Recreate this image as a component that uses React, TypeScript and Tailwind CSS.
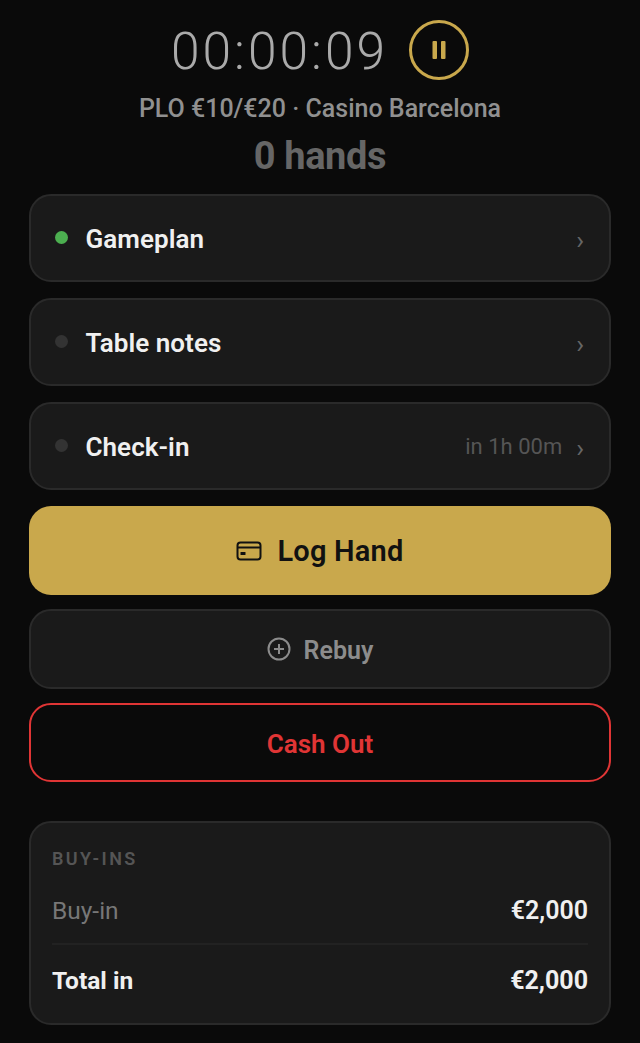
import React from "react";

function NavRow({ label, dot, right }: { label: string; dot: string; right?: string }) {
  return (
    <div className="flex h-[88px] items-center rounded-[22px] border-2 border-[#2a2a2a] bg-[#1a1a1a] pl-[24px] pr-[25px]">
      <span className={`mb-[1px] h-[13px] w-[13px] rounded-full ${dot}`} />
      <span className="ml-[17.5px] pt-[2px] text-[26px] font-semibold leading-none tracking-[0.05px] text-[#f0f0f0]">{label}</span>
      <span className="ml-auto pt-[2px] text-[22px] leading-none text-[#555555]">{right}</span>
      <span className="ml-[14px] pt-[4px] text-[26px] leading-none text-[#666666]">›</span>
    </div>
  );
}

export default function App() {
  return (
    <div className="flex h-[1043px] w-[640px] flex-col overflow-hidden bg-[#0a0a0a] px-[29px] pt-[20px] font-['Roboto',sans-serif]">
      <div className="flex h-[60px] items-center justify-center">
        <span className="pt-[4px] text-[51.5px] font-light leading-none tracking-[3px] text-[#aaaaaa]">00:00:09</span>
        <span className="ml-[21px] flex h-[60px] w-[60px] items-center justify-center rounded-full border-[3px] border-[#c9a84c]">
          <svg width="16" height="20" viewBox="0 0 16 20" fill="#c9a84c">
            <rect x="1.5" y="1" width="4.5" height="18" rx="1" />
            <rect x="10" y="1" width="4.5" height="18" rx="1" />
          </svg>
        </span>
      </div>
      <div className="mt-[15px] text-center text-[25px] font-medium leading-[28px] text-[#909090]">
        PLO €10/€20 · Casino Barcelona
      </div>
      <div className="mt-[11px] text-center text-[38px] font-bold leading-[44px] tracking-[-0.4px] text-[#666666]">0 hands</div>

      <div className="mt-[16px] flex flex-col gap-[16px]">
        <NavRow label="Gameplan" dot="bg-[#4caf50]" />
        <NavRow label="Table notes" dot="bg-[#333333]" />
        <NavRow label="Check-in" dot="bg-[#333333]" right="in 1h 00m" />
      </div>

      <button className="mt-[16px] flex h-[89px] items-center justify-center gap-[15px] rounded-[22px] bg-[#c9a84c] text-[29px] font-semibold tracking-[0.2px] text-[#111111]">
        <svg width="26" height="20" viewBox="0 0 26 20" fill="none" stroke="#111111" strokeWidth="2">
          <rect x="1.5" y="1.5" width="23" height="17" rx="3" />
          <path d="M1.5 6.5h23" />
          <rect x="4.5" y="11" width="5" height="3" rx="0.5" fill="#111111" stroke="none" />
        </svg>
        <span className="pt-[3px]">Log Hand</span>
      </button>

      <button className="mt-[14px] flex h-[80px] items-center justify-center gap-[13px] rounded-[22px] border-2 border-[#2a2a2a] bg-[#1a1a1a] text-[25px] font-semibold text-[#8c8c8c]">
        <svg width="24" height="24" viewBox="0 0 24 24" fill="none" stroke="#8c8c8c" strokeWidth="2">
          <circle cx="12" cy="12" r="10.5" />
          <path d="M12 7v10M7 12h10" />
        </svg>
        <span className="pt-[3px]">Rebuy</span>
      </button>

      <button className="mt-[14px] flex h-[79px] items-center justify-center rounded-[22px] border-2 border-[#e03535] text-[26px] font-semibold text-[#e03535]">
        <span className="pt-[3px]">Cash Out</span>
      </button>

      <div className="mt-[39px] flex h-[204px] flex-col rounded-[22px] border-2 border-[#2a2a2a] bg-[#1a1a1a] px-[21px]">
        <div className="mt-[26px] text-[18px] font-semibold leading-[20px] tracking-[2.4px] text-[#555555]">BUY-INS</div>
        <div className="mt-[27px] flex items-center justify-between pb-[17px] leading-[30px]">
          <span className="text-[24.5px] text-[#777777]">Buy-in</span>
          <span className="text-[25px] font-semibold text-[#f0f0f0]">€2,000</span>
        </div>
        <div className="flex items-center justify-between border-t-2 border-[#222222] pt-[21px] leading-[30px]">
          <span className="text-[24.5px] font-bold text-[#f0f0f0]">Total in</span>
          <span className="text-[25px] font-bold text-[#f0f0f0]">€2,000</span>
        </div>
      </div>
    </div>
  );
}
